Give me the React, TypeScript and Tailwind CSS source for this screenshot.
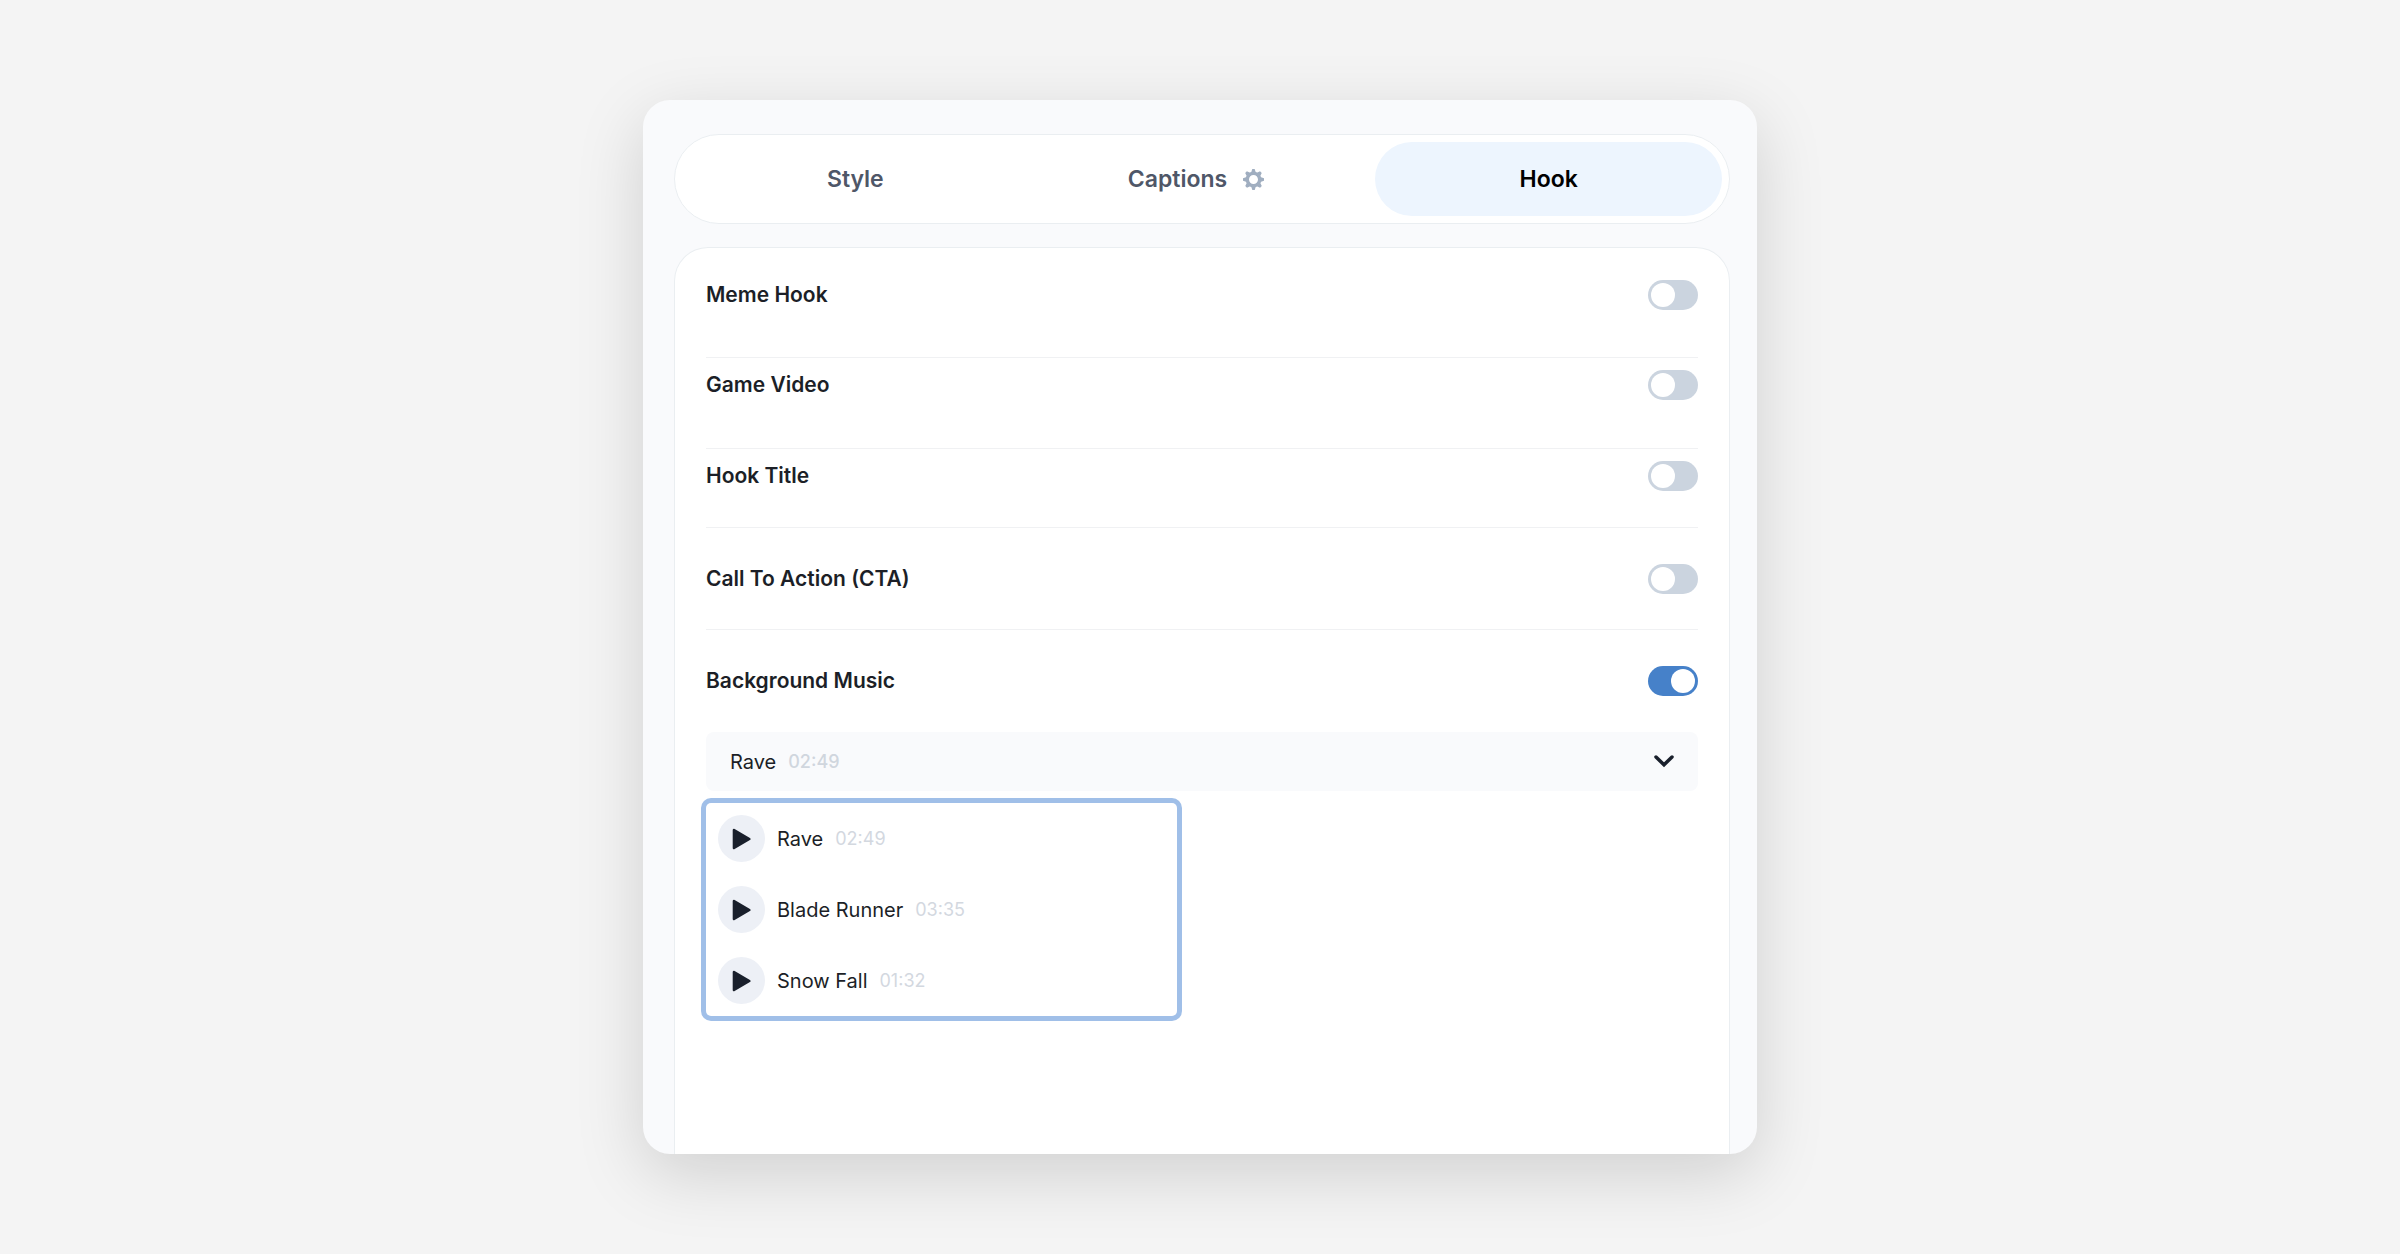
import { useState } from 'react';

const tabs = [
  { id: 'style', name: 'Style' },
  { id: 'captions', name: 'Captions', settings: true },
  { id: 'hook', name: 'Hook' },
];

const options = [
  { id: 'meme', name: 'Meme Hook', row: 'pt-8 pb-[47px] border-b' },
  { id: 'game', name: 'Game Video', row: 'pt-3 pb-12 border-b' },
  { id: 'title', name: 'Hook Title', row: 'pt-3 pb-9 border-b' },
  { id: 'cta', name: 'Call To Action (CTA)', row: 'pt-9 pb-[35px] border-b' },
  { id: 'music', name: 'Background Music', row: 'py-9' },
];

const tracks = [
  { name: 'Rave', time: '02:49' },
  { name: 'Blade Runner', time: '03:35' },
  { name: 'Snow Fall', time: '01:32' },
];

const GearIcon = () => (
  <svg viewBox="0 0 14 14" className="w-[21px] h-[21px] mr-3 text-[#a0aec0]" fill="currentColor" aria-hidden="true">
    <path
      fillRule="evenodd"
      d="M14,7.77 L14,6.17 L12.06,5.53 L11.61,4.44 L12.49,2.6 L11.36,1.47 L9.55,2.38 L8.46,1.93 L7.77,0.01 L6.17,0.01 L5.54,1.95 L4.43,2.4 L2.59,1.52 L1.46,2.65 L2.37,4.46 L1.92,5.55 L0,6.23 L0,7.82 L1.94,8.46 L2.39,9.55 L1.51,11.39 L2.64,12.52 L4.45,11.61 L5.54,12.06 L6.23,13.98 L7.82,13.98 L8.45,12.04 L9.56,11.59 L11.4,12.47 L12.53,11.34 L11.61,9.53 L12.08,8.44 L14,7.75 Z M7,10 C5.34,10 4,8.66 4,7 C4,5.34 5.34,4 7,4 C8.66,4 10,5.34 10,7 C10,8.66 8.66,10 7,10 Z"
    />
  </svg>
);

const ChevronIcon = () => (
  <svg viewBox="0 0 20 13" className="w-5 h-[13px]" fill="none" stroke="#1a202c" strokeWidth="3.5" strokeLinecap="round" strokeLinejoin="miter" aria-hidden="true">
    <path d="M2 2 L10 9.8 L18 2" />
  </svg>
);

const PlayIcon = () => (
  <svg viewBox="0 0 20 22" className="w-5 h-[22px]" fill="#1a202c" stroke="#1a202c" strokeWidth="2.6" strokeLinejoin="round" aria-hidden="true">
    <path d="M2 2 L17.3 11 L2 20 Z" />
  </svg>
);

type ToggleProps = {
  id: string;
  checked: boolean;
  onChange: () => void;
};

const Toggle = ({ id, checked, onChange }: ToggleProps) => (
  <input
    id={id}
    type="checkbox"
    role="switch"
    checked={checked}
    onChange={onChange}
    className="appearance-none shrink-0 w-[50px] h-[30px] p-[3px] rounded-full bg-[#cbd4df] cursor-pointer transition-colors before:block before:w-6 before:h-6 before:rounded-full before:bg-white checked:bg-[#4681c9] checked:before:translate-x-5"
  />
);

const App = () => {
  const [tab, setTab] = useState('hook');
  const [enabled, setEnabled] = useState<Record<string, boolean>>({ music: true });
  const [track, setTrack] = useState(tracks[0]);
  const [open, setOpen] = useState(true);

  const toggle = (id: string) => setEnabled({ ...enabled, [id]: !enabled[id] });

  return (
    <main className="min-h-screen flex justify-center bg-[#f4f4f4] px-6 py-[100px] font-['Inter',sans-serif] text-[#1c1f27]">
      <div className="flex flex-col w-full max-w-[1114px] pl-[31px] pr-[27px] pt-[34px] bg-[#f9fafc] rounded-[27px] overflow-hidden shadow-[0_20px_68px_rgba(0,0,0,0.15)]">
        <div role="tablist" className="grid grid-cols-3 p-[7px] bg-white border border-[#eaeef1] rounded-full">
          {tabs.map((item) => (
            <button
              key={item.id}
              role="tab"
              aria-selected={tab === item.id}
              onClick={() => setTab(item.id)}
              className={`flex items-center justify-center gap-4 h-[74px] rounded-full text-[23px] font-semibold cursor-pointer ${
                tab === item.id ? 'bg-[#edf5fe] text-black' : 'text-[#4f5768]'
              }`}
            >
              {item.name}
              {item.settings && <GearIcon />}
            </button>
          ))}
        </div>

        <section className="flex-1 mt-[23px] px-[31px] pb-8 bg-white border border-b-0 border-[#eaeef1] rounded-t-[34px]">
          {options.map((option) => (
            <div key={option.id} className={`flex items-center justify-between border-[#f0f1f3] ${option.row}`}>
              <label htmlFor={option.id} className="text-[21px] leading-[30px] font-semibold">
                {option.name}
              </label>
              <Toggle id={option.id} checked={!!enabled[option.id]} onChange={() => toggle(option.id)} />
            </div>
          ))}

          {enabled.music && (
            <div>
              <button
                aria-haspopup="listbox"
                aria-expanded={open}
                onClick={() => setOpen(!open)}
                className="flex items-center w-full h-[59px] px-6 gap-3 rounded-lg bg-[#f9fafc] cursor-pointer"
              >
                <span className="text-xl">{track.name}</span>
                <span className="flex-1 text-left text-lg font-medium text-[#d0d6de]">{track.time}</span>
                <ChevronIcon />
              </button>

              {open && (
                <ul className="mt-3 w-full max-w-[471px] bg-white shadow-[0_0_0_5px_#a0bfe8] rounded-[5px]">
                  {tracks.map((item) => (
                    <li key={item.name} className="flex items-center gap-3 p-3">
                      <button
                        aria-label={`Play ${item.name}`}
                        className="flex items-center justify-center w-[47px] h-[47px] rounded-full bg-[#edf0f6] cursor-pointer"
                      >
                        <PlayIcon />
                      </button>
                      <button
                        onClick={() => setTrack(item)}
                        className="flex flex-1 items-center gap-3 text-xl cursor-pointer"
                      >
                        {item.name}
                        <span className="text-lg text-[#d3d8df]">{item.time}</span>
                      </button>
                    </li>
                  ))}
                </ul>
              )}
            </div>
          )}
        </section>
      </div>
    </main>
  );
};

export default App;
